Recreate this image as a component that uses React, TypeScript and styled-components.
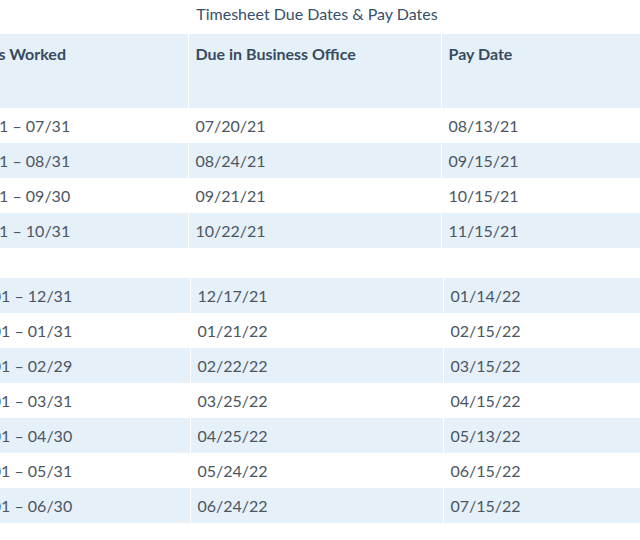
import React from "react";
import styled, { createGlobalStyle } from "styled-components";

const Global = createGlobalStyle`
  html, body { margin: 0; padding: 0; background: #ffffff; }
  body { font-family: Lato, "Open Sans", sans-serif; overflow: hidden; }
`;

const Page = styled.div`
  width: 640px;
  height: 540px;
  overflow: hidden;
  display: flex;
  flex-direction: column;
`;

const Title = styled.div`
  height: 34px;
  display: flex;
  align-items: center;
  justify-content: center;
  font-size: 16px;
  color: #37506a;
  line-height: 20px;
  padding: 0 6px 6px 0;
  box-sizing: border-box;
`;

const Table = styled.table<{ $shift: number }>`
  border-collapse: collapse;
  table-layout: fixed;
  width: 713px;
  margin-left: ${(p) => -43 + p.$shift}px;
  font-size: 16px;
  flex: none;
`;

const Col = styled.col<{ $w: number }>`
  width: ${(p) => p.$w}px;
`;

const HeadCell = styled.th`
  height: 74px;
  box-sizing: border-box;
  background: #e6f0f9;
  color: #364b60;
  font-weight: 700;
  text-align: left;
  vertical-align: top;
  padding: 10px 7px 0 7px;
  line-height: 20px;
  border-left: 1px solid #ffffff;
  &:first-child { border-left: none; }
`;

const Row = styled.tr<{ $alt: boolean }>`
  height: 35px;
  background: ${(p) => (p.$alt ? "#e6f0f9" : "#ffffff")};
`;

const Cell = styled.td`
  color: #4b5662;
  padding: 0 7px;
  line-height: 20px;
  vertical-align: middle;
  white-space: nowrap;
  border-left: 1px solid #ffffff;
  &:first-child { border-left: none; }
`;

const Gap = styled.div`
  height: 30px;
  flex: none;
`;

const top = [
  ["07/01 – 07/31", "07/20/21", "08/13/21"],
  ["08/01 – 08/31", "08/24/21", "09/15/21"],
  ["09/01 – 09/30", "09/21/21", "10/15/21"],
  ["10/01 – 10/31", "10/22/21", "11/15/21"],
];

const bottom = [
  ["12/01 – 12/31", "12/17/21", "01/14/22"],
  ["01/01 – 01/31", "01/21/22", "02/15/22"],
  ["02/01 – 02/29", "02/22/22", "03/15/22"],
  ["03/01 – 03/31", "03/25/22", "04/15/22"],
  ["04/01 – 04/30", "04/25/22", "05/13/22"],
  ["05/01 – 05/31", "05/24/22", "06/15/22"],
  ["06/01 – 06/30", "06/24/22", "07/15/22"],
];

const widths = [231, 253, 229];

function Cols() {
  return (
    <colgroup>
      {widths.map((w, i) => (
        <Col key={i} $w={w} />
      ))}
    </colgroup>
  );
}

export default function App() {
  return (
    <Page>
      <Global />
      <Title>Timesheet Due Dates &amp; Pay Dates</Title>
      <Table $shift={0}>
        <Cols />
        <thead>
          <tr>
            <HeadCell>Dates Worked</HeadCell>
            <HeadCell>Due in Business Office</HeadCell>
            <HeadCell>Pay Date</HeadCell>
          </tr>
        </thead>
        <tbody>
          {top.map((r, i) => (
            <Row key={i} $alt={i % 2 === 1}>
              {r.map((c, j) => (
                <Cell key={j}>{c}</Cell>
              ))}
            </Row>
          ))}
        </tbody>
      </Table>
      <Gap />
      <Table $shift={2}>
        <Cols />
        <tbody>
          {bottom.map((r, i) => (
            <Row key={i} $alt={i % 2 === 0}>
              {r.map((c, j) => (
                <Cell key={j}>{c}</Cell>
              ))}
            </Row>
          ))}
        </tbody>
      </Table>
    </Page>
  );
}
